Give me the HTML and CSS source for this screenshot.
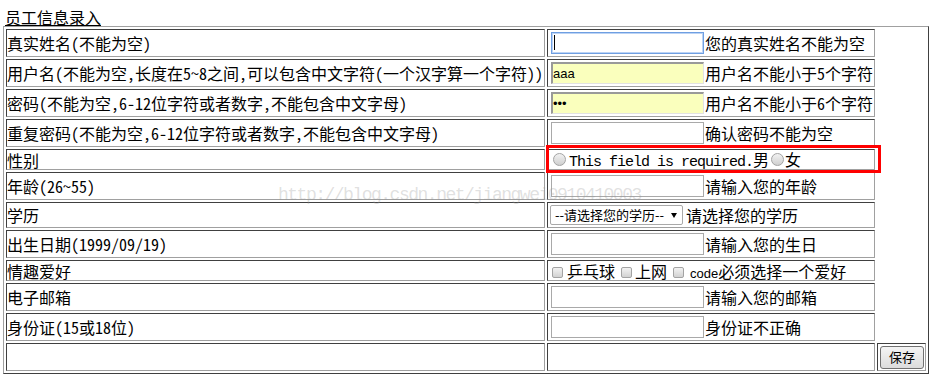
FILE: index.html
```html
<!DOCTYPE html>
<html lang="zh-CN">

<head>
    <meta charset="UTF-8">
    <meta name="viewport" content="width=device-width, initial-scale=1.0">
    <link rel="stylesheet" href="styles.css">
    <title>员工信息录入</title>
</head>

<body>
    <div class="page">
        <div class="title">员工信息录入</div>
        <table class="form-table">
            <tr class="row">
                <td class="label">真实姓名(不能为空)</td>
                <td class="field"><div class="line"><input type="text" class="text-input focused"><span class="tip">您的真实姓名不能为空</span></div></td>
            </tr>
            <tr class="row">
                <td class="label">用户名(不能为空,长度在5~8之间,可以包含中文字符(一个汉字算一个字符))</td>
                <td class="field"><div class="line"><input type="text" class="text-input autofill" value="aaa"><span class="tip">用户名不能小于5个字符</span></div></td>
            </tr>
            <tr class="row">
                <td class="label">密码(不能为空,6-12位字符或者数字,不能包含中文字母)</td>
                <td class="field"><div class="line"><input type="password" class="text-input autofill" value="aaa"><span class="tip">用户名不能小于6个字符</span></div></td>
            </tr>
            <tr class="row">
                <td class="label">重复密码(不能为空,6-12位字符或者数字,不能包含中文字母)</td>
                <td class="field"><div class="line"><input type="password" class="text-input"><span class="tip">确认密码不能为空</span></div></td>
            </tr>
            <tr class="row row-short">
                <td class="label">性别</td>
                <td class="field gender"><div class="line line-text"><input type="radio" name="sex" class="radio"><label class="error">This field is required.</label><span>男</span><input type="radio" name="sex" class="radio radio-second"><span>女</span></div></td>
            </tr>
            <tr class="row">
                <td class="label">年龄(26~55)</td>
                <td class="field"><div class="line"><input type="text" class="text-input"><span class="tip">请输入您的年龄</span></div></td>
            </tr>
            <tr class="row row-select">
                <td class="label">学历</td>
                <td class="field"><div class="line"><span class="select-wrap"><select class="edu-select">
                    <option>--请选择您的学历--</option>
                    <option>大专</option>
                    <option>本科</option>
                    <option>硕士</option>
                </select></span><span class="tip">请选择您的学历</span></div></td>
            </tr>
            <tr class="row">
                <td class="label">出生日期(1999/09/19)</td>
                <td class="field"><div class="line"><input type="text" class="text-input"><span class="tip">请输入您的生日</span></div></td>
            </tr>
            <tr class="row row-short">
                <td class="label">情趣爱好</td>
                <td class="field"><div class="line line-text"><input type="checkbox" class="check check-first"><span>乒乓球</span><input type="checkbox" class="check"><span>上网</span><input type="checkbox" class="check"><span class="code">code</span><span>必须选择一个爱好</span></div></td>
            </tr>
            <tr class="row">
                <td class="label">电子邮箱</td>
                <td class="field"><div class="line"><input type="text" class="text-input"><span class="tip">请输入您的邮箱</span></div></td>
            </tr>
            <tr class="row">
                <td class="label">身份证(15或18位)</td>
                <td class="field"><div class="line"><input type="text" class="text-input"><span class="tip">身份证不正确</span></div></td>
            </tr>
            <tr class="row">
                <td class="label"></td>
                <td class="field"></td>
                <td class="action"><button type="button" class="save-btn">保存</button></td>
            </tr>
        </table>
    </div>
    <div class="watermark">http://blog.csdn.net/jiangwei0910410003</div>
</body>

</html>
```

FILE: styles.css
```css
body {
    margin: 0;
    position: relative;
    background-color: #fff;
    color: #000;
    font-family: "Noto Sans Mono CJK SC", "Noto Sans CJK SC", sans-serif;
    font-feature-settings: "hwid";
    font-size: 16px;
}

.page {
    padding: 8px 0 0 3px;
}

.title {
    height: 18px;
    padding-left: 2px;
    line-height: 18px;
    text-decoration: underline;
}

.form-table {
    border-collapse: separate;
    border-spacing: 2px;
    border: 1px solid;
    border-color: #a0a0a0 #404040 #404040 #a0a0a0;
}

.form-table td {
    border: 1px solid;
    border-color: #404040 #a0a0a0 #a0a0a0 #404040;
    padding: 0 1px;
    line-height: 18px;
    white-space: nowrap;
    vertical-align: middle;
}

.row {
    height: 28px;
}

.row-short {
    height: 21px;
}

.row-select {
    height: 26px;
}

.form-table td.label {
    width: 537px;
    padding: 0;
}

.form-table td.field {
    width: 322px;
}

.form-table td.action {
    width: 45px;
}

.line {
    display: flex;
    align-items: center;
    white-space: nowrap;
}

/* rows of plain text with small controls share one baseline */
.line-text {
    align-items: baseline;
}

.text-input {
    box-sizing: border-box;
    width: 153px;
    height: 22px;
    margin: 0 1px 0 2px;
    padding: 0 1px;
    border: 1px solid #a9a9a9;
    background-color: #fff;
    font-family: "Liberation Sans", sans-serif;
    font-size: 13px;
    outline: none;
}

.text-input.focused {
    border-color: #6f9fe2;
    box-shadow: inset 0 0 0 1px #bcd3f4;
    background-image: linear-gradient(#000, #000);
    background-repeat: no-repeat;
    background-size: 1px 15px;
    background-position: 2px 2px;
}

.text-input.autofill {
    background-color: #faffbd;
    border-width: 2px 1px 1px 2px;
    border-color: #999 #e2e2e2 #e2e2e2 #999;
    padding-left: 0;
}

/* radio buttons, old chrome look */
.radio {
    appearance: none;
    -webkit-appearance: none;
    box-sizing: border-box;
    width: 13px;
    height: 13px;
    margin: 0 2px 0 4px;
    border: 1px solid #a3a3a3;
    border-radius: 50%;
    background: linear-gradient(#f2f2f2, #cfcfcf);
}

.radio-second {
    margin: 0 1px 0 2px;
}

.error {
    font-family: "Liberation Mono", monospace;
    font-size: 15px;
    letter-spacing: -1px;
    line-height: 12px;
    margin-left: 1px;
}

.gender {
    position: relative;
}

/* red annotation box drawn on the screenshot */
.gender::after {
    content: "";
    position: absolute;
    left: -2px;
    top: -5px;
    right: -7px;
    bottom: -4px;
    border: 3px solid #f00;
}

.select-wrap {
    position: relative;
    display: block;
    margin: 0 3px 0 1px;
}

.select-wrap::after {
    content: "";
    position: absolute;
    right: 6px;
    top: 8px;
    border-style: solid;
    border-width: 5px 3.5px 0;
    border-color: #000 transparent transparent;
}

.edu-select {
    appearance: none;
    -webkit-appearance: none;
    display: block;
    box-sizing: border-box;
    width: 133px;
    height: 20px;
    margin: 0;
    padding: 0 0 0 4px;
    border: 1px solid #a9a9a9;
    border-radius: 2px;
    background-color: #fff;
    color: #000;
    font-family: "Noto Sans CJK SC", sans-serif;
    font-size: 13px;
    line-height: 18px;
}

.check {
    appearance: none;
    -webkit-appearance: none;
    box-sizing: border-box;
    width: 11px;
    height: 11px;
    margin: 0 3px 2px 6px;
    border: 1px solid #a3a3a3;
    border-radius: 2px;
    background: linear-gradient(#f2f2f2, #d2d2d2);
}

.check-first {
    margin-left: 3px;
    margin-right: 4px;
}

.code {
    font-family: "Liberation Sans", sans-serif;
    font-size: 13px;
    line-height: 12px;
    margin-left: 3px;
}

.save-btn {
    box-sizing: border-box;
    height: 23px;
    margin: 0 0 0 1px;
    padding: 0 8px;
    border: 1px solid #707070;
    border-radius: 3px;
    background: linear-gradient(#f4f4f4, #dcdcdc);
    color: #000;
    font-family: "Noto Sans CJK SC", sans-serif;
    font-size: 13px;
    line-height: 20px;
}

.watermark {
    position: absolute;
    left: 278px;
    top: 185px;
    font-family: "Liberation Mono", monospace;
    font-size: 18px;
    letter-spacing: -1.5px;
    line-height: 20px;
    color: rgba(150, 150, 150, 0.3);
    pointer-events: none;
}
```
